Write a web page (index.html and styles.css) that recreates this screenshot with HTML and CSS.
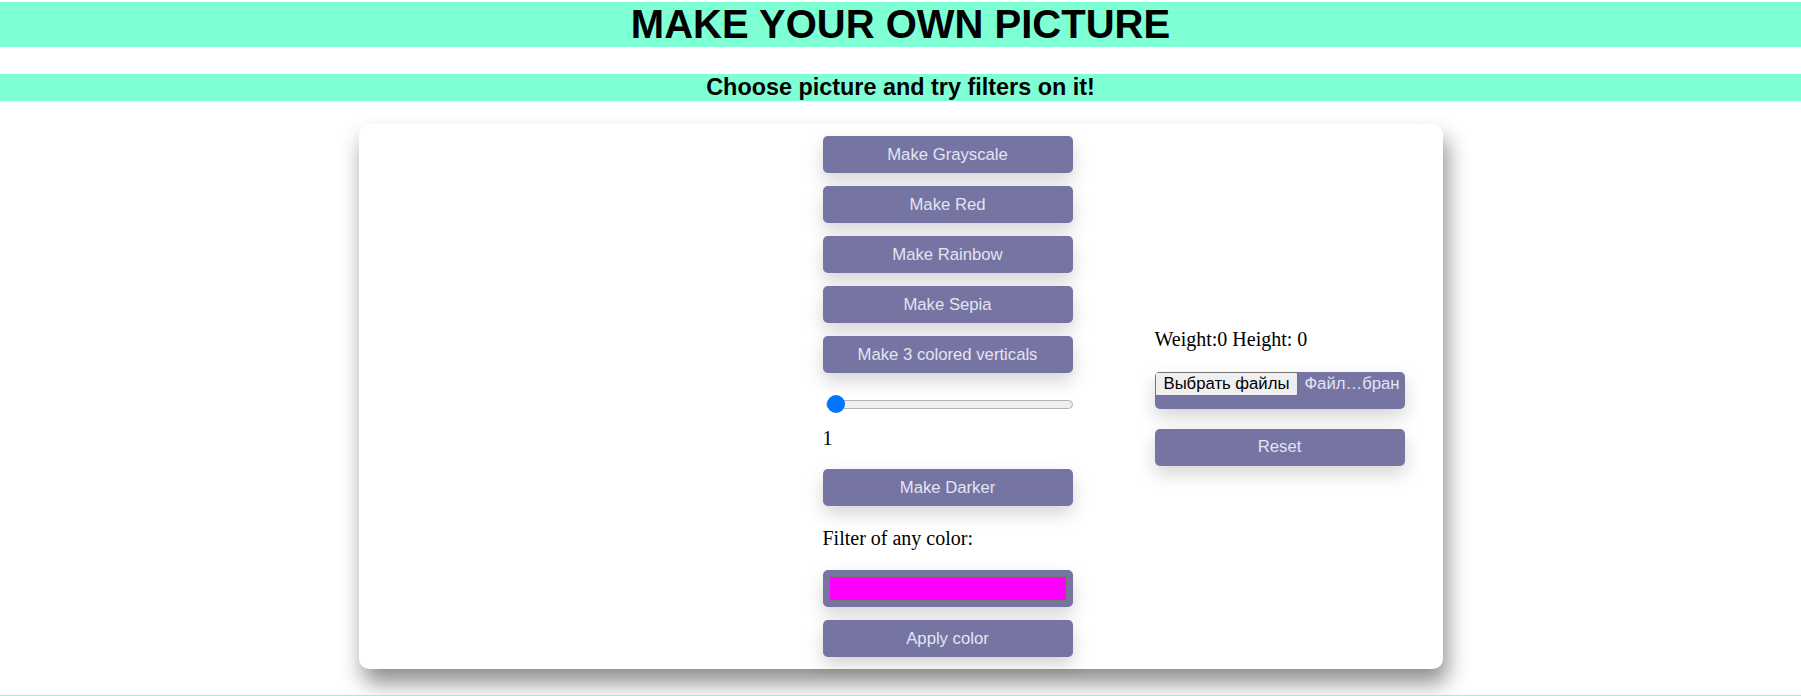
FILE: index.html
```html
<!DOCTYPE html>
<html lang="en">
<head>
<meta charset="utf-8">
<title>Make your own picture</title>
<link rel="stylesheet" href="styles.css">
</head>
<body>
  <h1 class="title">MAKE YOUR OWN PICTURE</h1>
  <h2 class="subtitle">Choose picture and try filters on it!</h2>

  <main class="card">
    <div class="canvas-area"><canvas class="picture" width="0" height="0"></canvas></div>

    <div class="controls">
      <button class="btn">Make Grayscale</button>
      <button class="btn gap-sm">Make Red</button>
      <button class="btn gap-sm">Make Rainbow</button>
      <button class="btn gap-sm">Make Sepia</button>
      <button class="btn gap-sm">Make 3 colored verticals</button>
      <input class="slider" type="range" min="1" max="100" value="1">
      <p class="value">1</p>
      <button class="btn darker">Make Darker</button>
      <p class="label">Filter of any color:</p>
      <input class="color" type="color" value="#ff00ff">
      <button class="btn gap-sm">Apply color</button>
    </div>

    <div class="info">
      <p class="size">Weight:0 Height: 0</p>
      <div class="file">
        <span class="file-btn">Выбрать файлы</span>
        <span class="file-name">Файл…бран</span>
      </div>
      <button class="btn reset">Reset</button>
    </div>
  </main>

  <footer class="footer"></footer>
</body>
</html>
```

FILE: styles.css
```css
html, body {
  margin: 0;
  padding: 0;
  background: #ffffff;
}

body {
  font-family: "Liberation Serif", "Times New Roman", serif;
  font-size: 20px;
  color: #000;
}

.title {
  margin: 2px 0 0;
  background: #7fffd4;
  font-family: "Liberation Sans", Arial, sans-serif;
  font-weight: 700;
  font-size: 40px;
  line-height: 45px;
  text-align: center;
}

.subtitle {
  margin: 27px 0 0;
  background: #7fffd4;
  font-family: "Liberation Sans", Arial, sans-serif;
  font-weight: 700;
  font-size: 23.4px;
  line-height: 27px;
  text-align: center;
}

.card {
  box-sizing: border-box;
  width: 1084px;
  margin: 23px auto 0;
  padding: 12px 38px 12px 40px;
  background: #fff;
  border-radius: 10px;
  box-shadow: 4px 14px 22px rgba(0, 0, 0, 0.45);
  display: flex;
  align-items: center;
}

.canvas-area {
  flex: none;
  width: 343px;
}

.picture {
  display: block;
}

.controls {
  flex: none;
  width: 250px;
  margin-left: 81px;
  display: flex;
  flex-direction: column;
}

.info {
  flex: none;
  width: 250px;
  margin-left: 82px;
  display: flex;
  flex-direction: column;
}

.btn {
  display: block;
  box-sizing: border-box;
  width: 250px;
  height: 37px;
  margin: 0;
  padding: 0;
  border: none;
  border-radius: 5px;
  background: #7574a3;
  color: #e4e4f2;
  font-family: "Liberation Sans", Arial, sans-serif;
  font-size: 16.7px;
  box-shadow: 0 8px 18px rgba(0, 0, 0, 0.17);
  cursor: pointer;
}

.gap-sm {
  margin-top: 13px;
}

.slider {
  -webkit-appearance: none;
  appearance: none;
  display: block;
  width: 247px;
  height: 18px;
  margin: 22px 0 0 3px;
  padding: 0;
  background: transparent;
}

.slider::-webkit-slider-runnable-track {
  box-sizing: border-box;
  height: 9px;
  background: #efefef;
  border: 1px solid #b2b2b2;
  border-radius: 5px;
}

.slider::-webkit-slider-thumb {
  -webkit-appearance: none;
  appearance: none;
  width: 18px;
  height: 18px;
  margin-top: -5.5px;
  border: none;
  border-radius: 50%;
  background: #0075ff;
}

.value {
  margin: 14px 0 0;
  line-height: 23px;
}

.darker {
  margin-top: 19px;
}

.label {
  margin: 21px 0 0;
  line-height: 23px;
}

.color {
  display: block;
  box-sizing: border-box;
  width: 250px;
  height: 37px;
  margin: 20px 0 0;
  padding: 6px;
  border: none;
  border-radius: 5px;
  background: #7574a3;
  box-shadow: 0 8px 18px rgba(0, 0, 0, 0.17);
  cursor: pointer;
}

.color::-webkit-color-swatch-wrapper {
  padding: 0;
}

.color::-webkit-color-swatch {
  border: 1px solid #777;
  border-radius: 0;
}

.size {
  margin: 0;
  line-height: 23px;
}

.file {
  box-sizing: border-box;
  height: 37px;
  margin-top: 21px;
  border-radius: 5px;
  background: #7574a3;
  box-shadow: 0 8px 18px rgba(0, 0, 0, 0.17);
  display: flex;
  align-items: flex-start;
  overflow: hidden;
  font-family: "Liberation Sans", Arial, sans-serif;
  font-size: 16.7px;
  line-height: 20px;
  white-space: nowrap;
}

.file-btn {
  flex: none;
  padding: 1px 8px;
  border: 1px solid #767676;
  border-radius: 2px;
  background: #efefef;
  color: #000;
}

.file-name {
  margin-left: 6px;
  padding-top: 2px;
  color: #e4e4f2;
}

.reset {
  margin-top: 20px;
}

.footer {
  height: 1px;
  margin-top: 26px;
  background: #7fffd4;
}
```
